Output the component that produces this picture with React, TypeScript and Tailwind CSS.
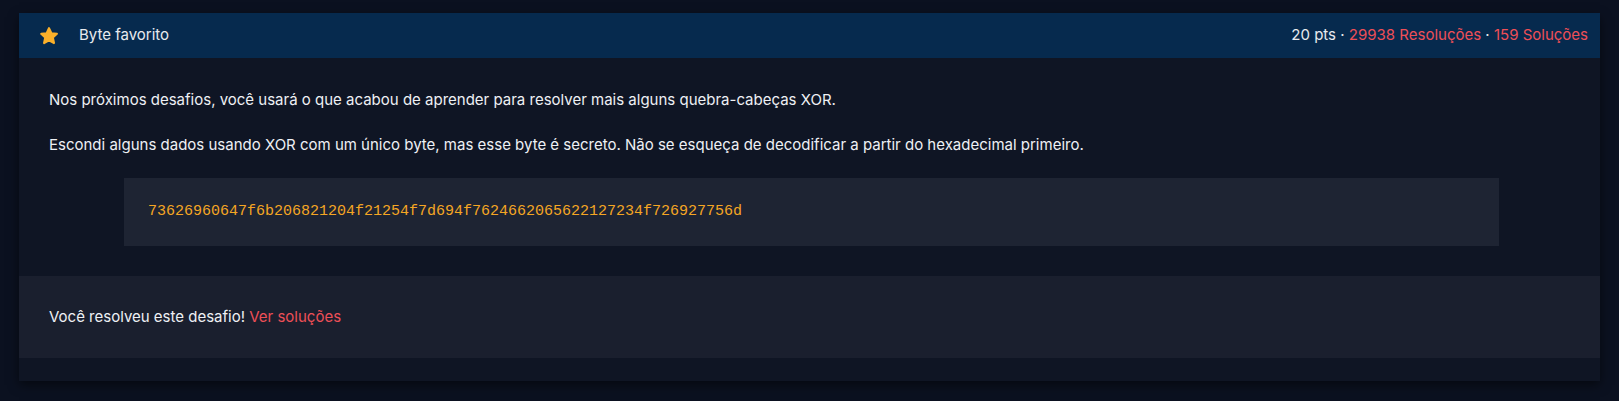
export default function App() {
  return (
    <div
      className="min-h-screen bg-[#0b1120] px-[19px] pt-[13px] pb-5"
      style={{ fontFamily: "Inter, 'Noto Sans', sans-serif" }}
    >
      <div className="bg-[#0f1524] shadow-[0_4px_10px_rgba(0,0,0,0.5)]">
        {/* Header */}
        <div className="flex h-[45px] items-center justify-between bg-[#062a4e] pl-[20px] pr-[12px] text-[15px]">
          <div className="flex items-center gap-[20px]">
            <svg width="20" height="20" viewBox="0 0 24 24" className="text-[#fbb02a]">
              <path
                fill="currentColor"
                stroke="currentColor"
                strokeWidth="2.5"
                strokeLinejoin="round"
                d="M12 2.5l2.9 6.2 6.6.7-4.9 4.5 1.4 6.6L12 17.2l-5.9 3.3 1.4-6.6-4.9-4.5 6.6-.7z"
              />
            </svg>
            <span className="text-[#e8eaef]">Byte favorito</span>
          </div>
          <div className="text-[#e8eaef]">
            20 pts · <span className="text-[#ee4f57]">29938 Resoluções</span> ·{" "}
            <span className="text-[#ee4f57]">159 Soluções</span>
          </div>
        </div>

        {/* Body */}
        <div className="px-[30px] pt-[30px] pb-[30px] text-[15px] leading-6 text-[#eef0f4]">
          <p>
            Nos próximos desafios, você usará o que acabou de aprender para resolver mais alguns
            quebra-cabeças XOR.
          </p>
          <p className="mt-[21px]">
            Escondi alguns dados usando XOR com um único byte, mas esse byte é secreto. Não se
            esqueça de decodificar a partir do hexadecimal primeiro.
          </p>
          <pre
            className="mt-[21px] ml-[75px] mr-[71px] bg-[#1e2433] px-6 py-[23px] text-[15px] leading-[22px] text-[#f5a623]"
            style={{ fontFamily: "'Liberation Mono', monospace" }}
          >
            73626960647f6b206821204f21254f7d694f7624662065622127234f726927756d
          </pre>
        </div>

        {/* Footer */}
        <div className="flex h-[82px] items-center bg-[#1a1f2e] px-[30px] text-[15px] text-[#eef0f4]">
          <span>
            Você resolveu este desafio! <a className="text-[#ee4f57]">Ver soluções</a>
          </span>
        </div>
        <div className="h-[23px]" />
      </div>
    </div>
  )
}
